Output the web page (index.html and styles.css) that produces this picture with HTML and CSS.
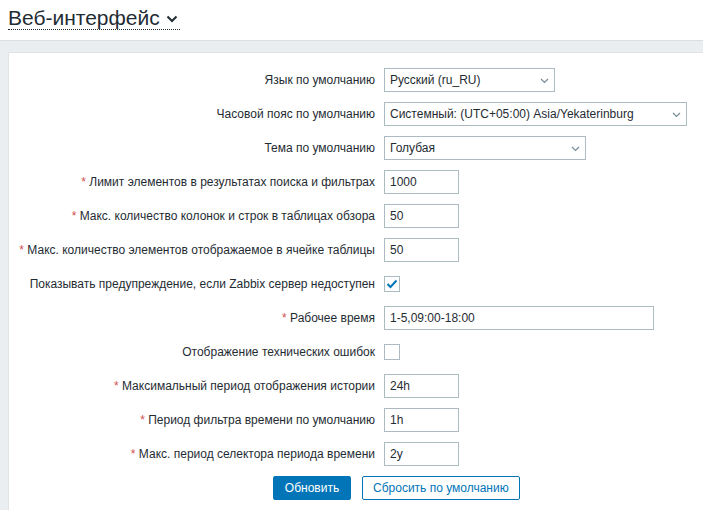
FILE: index.html
```html
<!DOCTYPE html>
<html lang="ru">
<head>
<meta charset="utf-8">
<title>Веб-интерфейс</title>
<link rel="stylesheet" href="styles.css">
</head>
<body>
<header class="page-header">
  <h1 class="title">
    <span class="title-text">Веб-интерфейс</span>
    <svg class="title-chevron" width="12" height="8" viewBox="0 0 12 8" aria-hidden="true"><polyline points="1.5,1.5 6,6 10.5,1.5" fill="none" stroke="#1f2c33" stroke-width="2"/></svg>
  </h1>
</header>
<main class="wrapper">
  <div class="panel">
    <form class="form-grid">
      <label class="lbl">Язык по умолчанию</label>
      <div class="field"><div class="select w-lang"><span>Русский (ru_RU)</span><svg class="arrow" width="9" height="6" viewBox="0 0 9 6"><polyline points="1,1 4.5,4.5 8,1" fill="none" stroke="#768d99" stroke-width="1.2"/></svg></div></div>

      <label class="lbl">Часовой пояс по умолчанию</label>
      <div class="field"><div class="select w-tz"><span>Системный: (UTC+05:00) Asia/Yekaterinburg</span><svg class="arrow" width="9" height="6" viewBox="0 0 9 6"><polyline points="1,1 4.5,4.5 8,1" fill="none" stroke="#768d99" stroke-width="1.2"/></svg></div></div>

      <label class="lbl">Тема по умолчанию</label>
      <div class="field"><div class="select w-theme"><span>Голубая</span><svg class="arrow" width="9" height="6" viewBox="0 0 9 6"><polyline points="1,1 4.5,4.5 8,1" fill="none" stroke="#768d99" stroke-width="1.2"/></svg></div></div>

      <label class="lbl"><span class="req">*</span> Лимит элементов в результатах поиска и фильтрах</label>
      <div class="field"><div class="input w-num">1000</div></div>

      <label class="lbl"><span class="req">*</span> Макс. количество колонок и строк в таблицах обзора</label>
      <div class="field"><div class="input w-num">50</div></div>

      <label class="lbl"><span class="req">*</span> Макс. количество элементов отображаемое в ячейке таблицы</label>
      <div class="field"><div class="input w-num">50</div></div>

      <label class="lbl">Показывать предупреждение, если Zabbix сервер недоступен</label>
      <div class="field"><div class="checkbox"><svg width="14" height="14" viewBox="0 0 14 14"><polyline points="2.5,7 5.5,10 11.5,3.5" fill="none" stroke="#0275b8" stroke-width="2"/></svg></div></div>

      <label class="lbl"><span class="req">*</span> Рабочее время</label>
      <div class="field"><div class="input w-wide">1-5,09:00-18:00</div></div>

      <label class="lbl">Отображение технических ошибок</label>
      <div class="field"><div class="checkbox"></div></div>

      <label class="lbl"><span class="req">*</span> Максимальный период отображения истории</label>
      <div class="field"><div class="input w-num">24h</div></div>

      <label class="lbl"><span class="req">*</span> Период фильтра времени по умолчанию</label>
      <div class="field"><div class="input w-num">1h</div></div>

      <label class="lbl"><span class="req">*</span> Макс. период селектора периода времени</label>
      <div class="field"><div class="input w-num">2y</div></div>

      <div class="buttons">
        <button type="button" class="btn btn-primary">Обновить</button>
        <button type="button" class="btn btn-alt">Сбросить по умолчанию</button>
      </div>
    </form>
  </div>
</main>
</body>
</html>
```
FILE: styles.css
```css
html, body {
  margin: 0;
  padding: 0;
  height: 100%;
  overflow: hidden;
  background: #fff;
  font-family: "Liberation Sans", Arial, sans-serif;
  font-size: 12px;
  color: #1f2c33;
}

.page-header {
  height: 40px;
  padding: 0 8px;
}

.title {
  margin: 0;
  padding-top: 6px;
  display: inline-flex;
  align-items: center;
  font-size: 21px;
  font-weight: normal;
  line-height: 23px;
  border-bottom: 1px dotted #1f2c33;
}

.title-chevron {
  margin-left: 6px;
  margin-right: 2px;
  margin-top: 2px;
}

.wrapper {
  border-top: 1px solid #d9dee1;
  background: #ebeef0;
  padding: 11px 0 0 8px;
  height: calc(100% - 40px);
  box-sizing: border-box;
}

.panel {
  background: #fff;
  border-top: 1px solid #dfe4e7;
  border-left: 1px solid #dfe4e7;
  height: 100%;
  padding-top: 15px;
  box-sizing: border-box;
}

.form-grid {
  display: grid;
  grid-template-columns: 366px 1fr;
  column-gap: 9px;
  row-gap: 10px;
  grid-auto-rows: 24px;
}

.lbl {
  text-align: right;
  line-height: 24px;
  white-space: nowrap;
}

.req {
  color: #d64e4e;
}

.field {
  display: flex;
  align-items: center;
}

.input, .select {
  box-sizing: border-box;
  height: 24px;
  border: 1px solid #acbbc2;
  background: #fff;
  padding: 0 5px;
  line-height: 22px;
  color: #1f2c33;
}

.select {
  display: flex;
  align-items: center;
  justify-content: space-between;
  padding-right: 5px;
}

.arrow {
  flex: none;
  margin-top: 1px;
}

.w-lang { width: 171px; }
.w-tz { width: 303px; }
.w-theme { width: 202px; }
.w-num { width: 75px; }
.w-wide { width: 270px; }

.checkbox {
  box-sizing: border-box;
  width: 16px;
  height: 16px;
  border: 1px solid #acbbc2;
  background: #fff;
  display: flex;
  align-items: center;
  justify-content: center;
}

.buttons {
  grid-column: 1 / -1;
  display: flex;
  gap: 11px;
  padding-left: 264px;
}

.btn {
  box-sizing: border-box;
  height: 24px;
  padding: 0 10px;
  border: 1px solid #0275b8;
  border-radius: 2px;
  font-family: "Liberation Sans", Arial, sans-serif;
  font-size: 12px;
  line-height: 22px;
  white-space: nowrap;
  cursor: pointer;
}

.btn-primary {
  background: #0275b8;
  color: #fff;
  min-width: 78px;
}

.btn-alt {
  background: #fff;
  color: #0275b8;
}
```
